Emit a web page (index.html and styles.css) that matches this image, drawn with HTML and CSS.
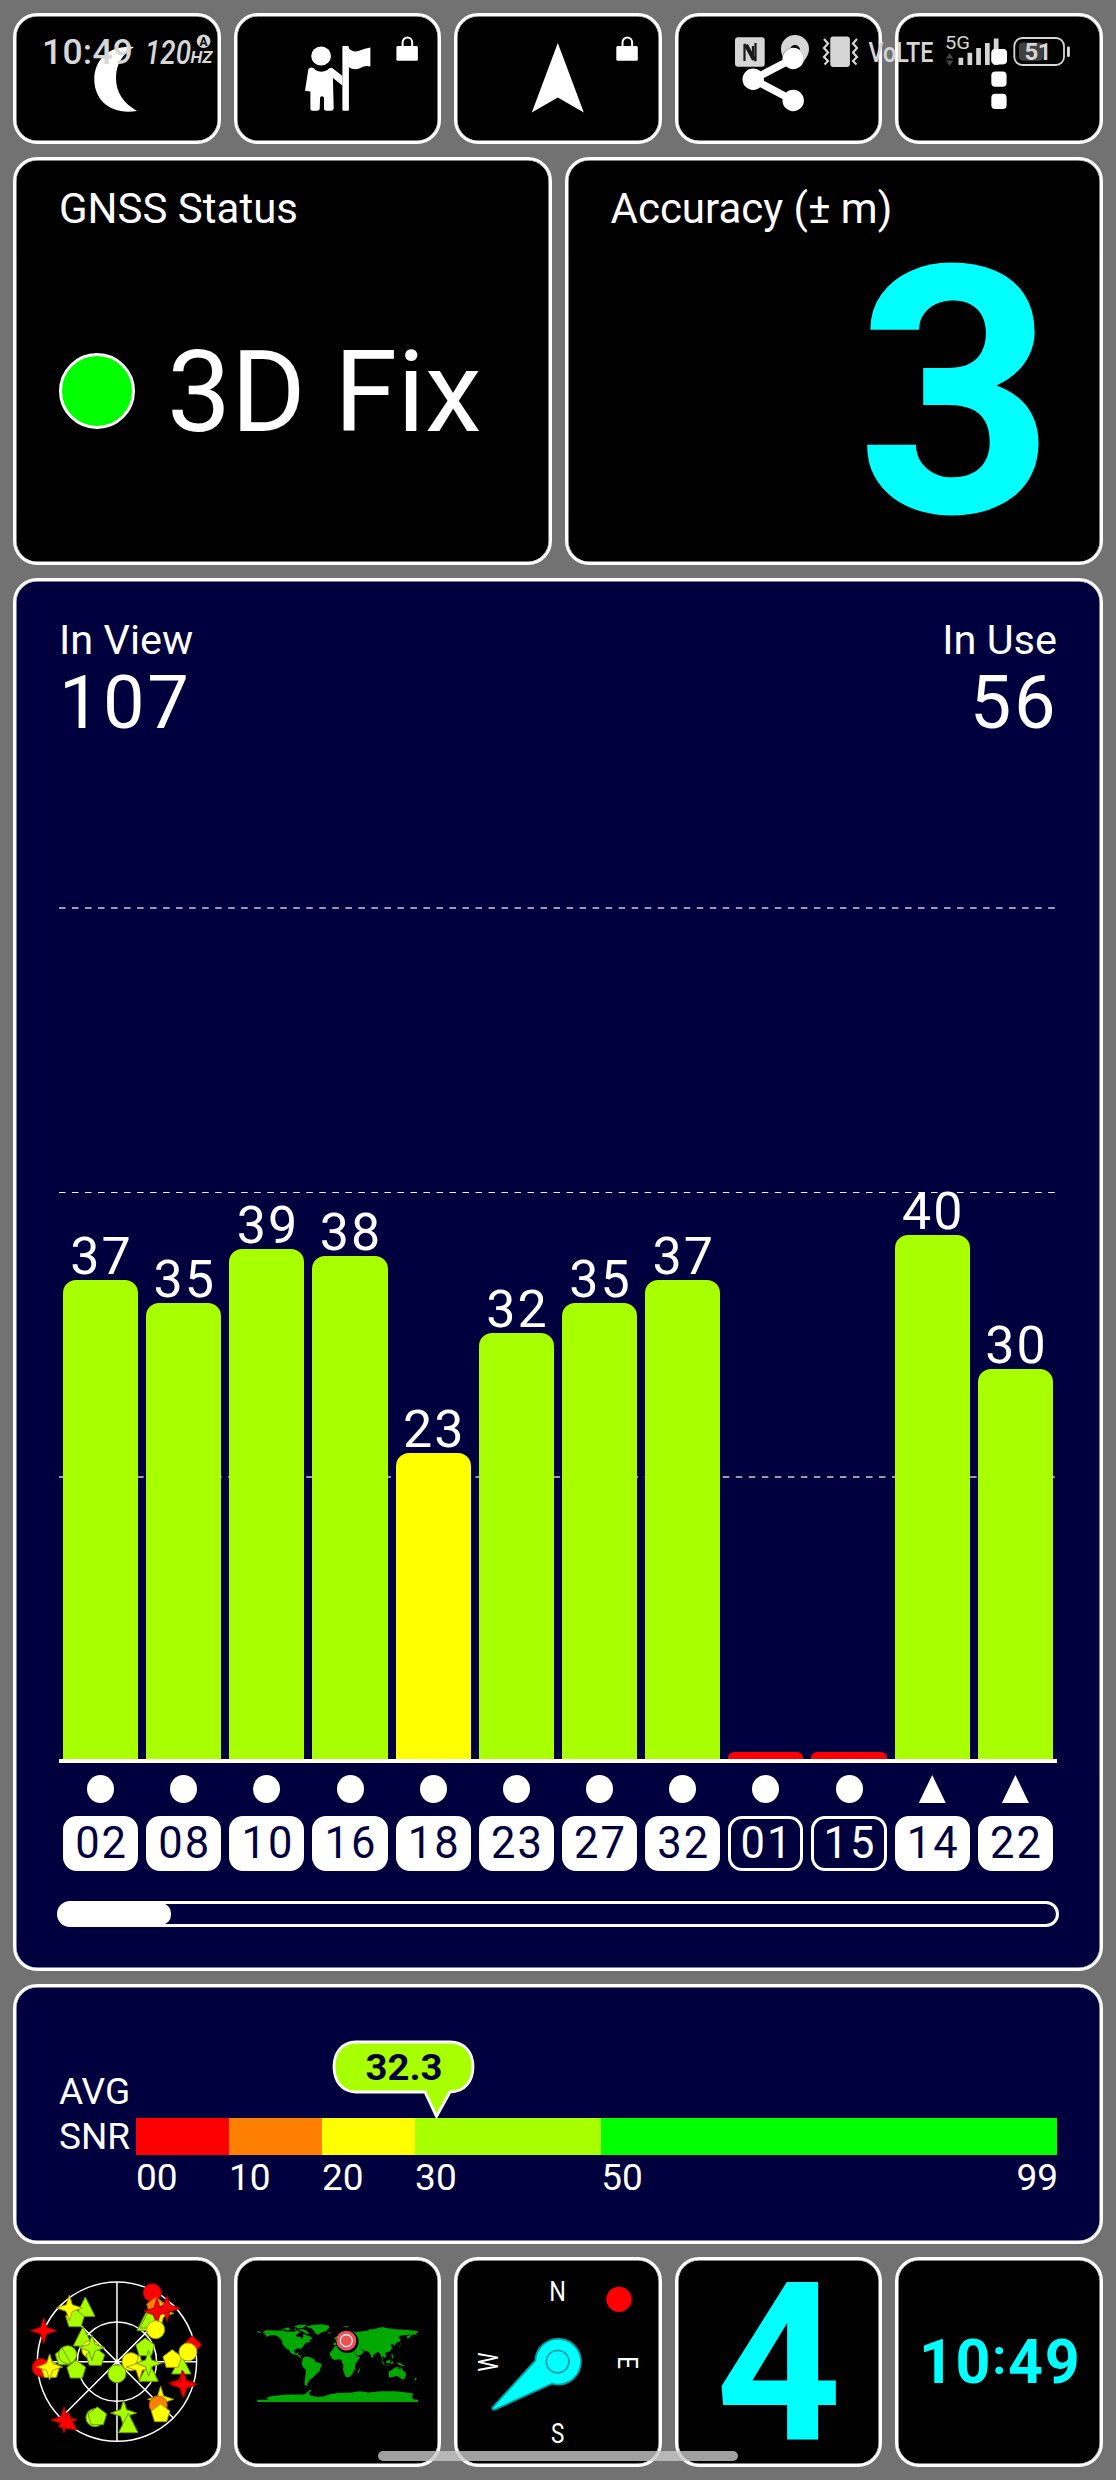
FILE: index.html
```html
<!DOCTYPE html>
<html lang="en">
<head>
<meta charset="utf-8">
<title>GNSS Status</title>
<link rel="stylesheet" href="styles.css">
</head>
<body>
<svg class="defs" width="0" height="0" aria-hidden="true">
  <defs>
    <g id="lock">
      <path d="M402.2 47v-4.5a4.8 5 0 0 1 9.6 0V47" fill="none" stroke="#fff" stroke-width="2"/>
      <rect x="396" y="46" width="21.5" height="14.8" rx="1.5" fill="#fff"/>
    </g>
    <circle id="circ" r="27"/>
    <path id="star" d="M0-39L9-10L39 0L9 10L0 39L-9 10L-39 0L-9-10Z"/>
    <path id="pent" d="M0-29L28-8L18 24H-18L-28-8Z"/>
    <path id="tri" d="M0-32L29 26H-29Z"/>
    <path id="dia" d="M0-28L28 0L0 28L-28 0Z"/>
  </defs>
</svg>

<main class="screen">
  <nav class="row five">
    <button class="card"><svg class="fill" viewBox="16 16 201.6 125"><path fill="#fff" d="M134 47C108 45 94.3 60 94.3 80C94.8 101 111 115 137 111C123 103 116 92 116 78C116 64 122.500 54 134 47Z"/></svg></button>
    <button class="card"><svg class="fill" viewBox="236.600 16 201.600 125" fill="#fff">
      <ellipse cx="320.7" cy="56" rx="9.900" ry="9.400"/>
      <path d="M308 69Q309 67.500 311 67.500Q314 67.800 315 70Q320.700 73.600 327 70Q329 67.500 331.500 67.700L342 76V85.500L332.500 78L333.300 108.500Q333 110.800 330.500 110.800H326Q323.800 110.800 323.600 109V97.500Q321.500 94.800 319.700 97.500L319.300 109Q319 110.800 316.500 110.800H312Q310 110.800 310 109V91.500L304.600 90.700Z"/>
      <rect x="342" y="46" width="6.500" height="64.800" rx="1"/>
      <path d="M348 48Q352 52.500 358 51Q365 48 370 47.500V66.500Q365 65 360 68Q354 71 348 67Z"/>
      <use href="#lock"/></svg></button>
    <button class="card"><svg class="fill" viewBox="457.200 16 201.600 125" fill="#fff"><path d="M558 43L584 112.500L558 97.500L532 112.500Z"/><use href="#lock" x="220.500"/></svg></button>
    <button class="card"><svg class="fill" viewBox="677.800 16 201.600 125" fill="#fff"><path d="M793 58.500L753 79.300L793 100.500" fill="none" stroke="#fff" stroke-width="7.500"/><circle cx="793" cy="58.500" r="10.700"/><circle cx="753" cy="79.300" r="10.700"/><circle cx="793" cy="100.500" r="10.700"/></svg></button>
    <button class="card"><svg class="fill" viewBox="898.400 16 201.600 125" fill="#fff"><rect x="991.700" y="49" width="15.300" height="15.300" rx="4"/><rect x="991.700" y="71.500" width="15.300" height="15.300" rx="4"/><rect x="991.700" y="93.700" width="15.300" height="15.300" rx="4"/></svg></button>
  </nav>

  <section class="row two">
    <div class="card info">
      <div class="label">GNSS Status</div>
      <div class="fix"><span class="led"></span>3D Fix</div>
    </div>
    <div class="card info">
      <div class="label">Accuracy (± m)</div>
      <div class="accuracy">3</div>
    </div>
  </section>

  <section class="card navy sats">
    <header class="counts">
      <div><div class="label">In View</div><div class="count">107</div></div>
      <div class="right"><div class="label">In Use</div><div class="count">56</div></div>
    </header>
    <div class="plot">
      <div class="col">37<i class="bar" style="height:479px"></i></div>
      <div class="col">35<i class="bar" style="height:456px"></i></div>
      <div class="col">39<i class="bar" style="height:510px"></i></div>
      <div class="col">38<i class="bar" style="height:503px"></i></div>
      <div class="col">23<i class="bar mid" style="height:306px"></i></div>
      <div class="col">32<i class="bar" style="height:426px"></i></div>
      <div class="col">35<i class="bar" style="height:456px"></i></div>
      <div class="col">37<i class="bar" style="height:479px"></i></div>
      <div class="col"><i class="bar none" style="height:7px"></i></div>
      <div class="col"><i class="bar none" style="height:7px"></i></div>
      <div class="col">40<i class="bar" style="height:524px"></i></div>
      <div class="col">30<i class="bar" style="height:390px"></i></div>
    </div>
    <div class="ids">
      <div class="id"><i class="gps"></i><b>02</b></div>
      <div class="id"><i class="gps"></i><b>08</b></div>
      <div class="id"><i class="gps"></i><b>10</b></div>
      <div class="id"><i class="gps"></i><b>16</b></div>
      <div class="id"><i class="gps"></i><b>18</b></div>
      <div class="id"><i class="gps"></i><b>23</b></div>
      <div class="id"><i class="gps"></i><b>27</b></div>
      <div class="id"><i class="gps"></i><b>32</b></div>
      <div class="id"><i class="gps"></i><b class="unused">01</b></div>
      <div class="id"><i class="gps"></i><b class="unused">15</b></div>
      <div class="id"><i class="glonass"></i><b>14</b></div>
      <div class="id"><i class="glonass"></i><b>22</b></div>
    </div>
    <div class="scroll"><div class="thumb"></div></div>
  </section>

  <section class="card navy snr">
    <div class="snr-name">AVG<br>SNR</div>
    <div class="gauge">
      <div class="scale">
        <i class="s10 c0"></i><i class="s10 c1"></i><i class="s10 c2"></i><i class="s20 c3"></i><i class="s49 c4"></i>
        <svg class="bubble" width="144" height="80" viewBox="0 0 144 80">
          <path d="M24 2H118C133 2 141 13 141 26.500C141 41 133 52 118 52L104.500 76.500L93 52H24C10 52 2 41 2 26.500C2 13 10 2 24 2Z" fill="#a8ff00" stroke="#fff" stroke-width="2.800"/>
          <text x="72" y="40" text-anchor="middle" fill="#00003e" font-size="37" font-weight="700" textLength="77" lengthAdjust="spacingAndGlyphs">32.3</text>
        </svg>
      </div>
      <div class="ticks"><span class="s10">00</span><span class="s10">10</span><span class="s10">20</span><span class="s20">30</span><span class="s49">50<span class="last">99</span></span></div>
    </div>
  </section>

  <nav class="row five">
    <div class="card"><svg class="fill" viewBox="48 60 605 612">
      <g fill="none" stroke="#fff" stroke-width="4.500"><circle cx="351" cy="365" r="239"/><circle cx="351" cy="365" r="119"/><path d="M351 126V604M112 365H590M182 196L520 534M182 534L520 196"/></g>
      <g stroke-width="3">
        <g class="red"><use href="#circ" x="457" y="158"/></g>
        <g class="orange"><use href="#pent" x="468" y="200"/></g>
        <g class="lime"><use href="#tri" x="440" y="246"/><use href="#tri" x="449" y="238"/></g>
        <g class="yellow"><use href="#star" x="482" y="220"/></g>
        <g class="red"><use href="#star" x="501" y="205"/><use href="#star" x="471" y="214"/></g>
        <g class="yellow"><use href="#circ" x="467" y="269"/></g>
        <g class="lime"><use href="#tri" x="256" y="203"/><use href="#pent" x="225" y="236"/></g>
        <g class="yellow"><use href="#star" x="208" y="204"/></g>
        <g class="red"><use href="#star" x="131" y="272"/><use href="#circ" x="124" y="383"/></g>
        <g class="lime"><use href="#tri" x="249" y="292"/></g>
        <g class="yellow"><use href="#circ" x="272" y="328"/></g>
        <g class="lime"><use href="#pent" x="286" y="352"/><use href="#star" x="276" y="323"/><use href="#pent" x="194" y="350"/><use href="#circ" x="203" y="344"/><path d="M186 323L213 371"/><use href="#pent" x="229" y="390"/></g>
        <g class="yellow"><use href="#pent" x="151" y="388"/><use href="#star" x="149" y="381"/></g>
        <g class="lime"><use href="#circ" x="351" y="401"/><use href="#pent" x="436" y="323"/></g>
        <g class="yellow"><use href="#circ" x="393" y="365"/></g>
        <g class="lime"><use href="#tri" x="446" y="398"/></g>
        <g class="yellow"><use href="#star" x="418" y="381"/></g>
        <g class="lime"><use href="#star" x="446" y="370"/><use href="#tri" x="544" y="376"/></g>
        <g class="yellow"><use href="#pent" x="517" y="358"/></g>
        <g class="red"><use href="#dia" x="577" y="315"/></g>
        <g class="yellow"><use href="#circ" x="564" y="336"/></g>
        <g class="red"><use href="#star" x="547" y="429"/><use href="#star" x="551" y="434"/></g>
        <g class="yellow"><use href="#star" x="482" y="478"/></g>
        <g class="orange"><use href="#circ" x="475" y="495"/></g>
        <g class="yellow"><use href="#pent" x="482" y="521"/></g>
        <g class="lime"><use href="#star" x="371" y="519"/><use href="#tri" x="385" y="552"/><use href="#circ" x="285" y="533"/><use href="#pent" x="292" y="530"/></g>
        <g class="red"><use href="#star" x="192" y="540"/><path d="M205 518L230 570L175 560Z"/></g>
      </g>
    </svg></div>
    <div class="card"><svg class="fill" viewBox="20 60 605 612">
      <g transform="translate(322 365.500) scale(1.339 -1.339)" fill="#00a800">
        <path d="M-168 66L-162 71L-156 71L-140 70L-128 70L-115 68L-108 68L-96 68L-93 71L-87 68L-82 69L-86 65L-94 60L-92 57L-82 55L-80 51L-78 53L-77 58L-78 62L-73 62L-70 59L-65 59L-60 55L-56 52L-65 49L-60 46L-65 44L-70 43L-74 40L-76 36L-81 31L-80 26L-82 28L-84 30L-90 30L-97 27L-97 22L-94 18L-91 19L-88 21L-87 20L-89 16L-84 15L-83 11L-80 8L-78 9L-80 7L-84 9L-87 13L-94 16L-98 16L-105 20L-109 26L-114 31L-110 24L-113 27L-118 34L-124 40L-124 47L-130 54L-138 59L-150 60L-158 56L-164 54L-158 58L-165 61L-161 64ZM-180 69L-170 67L-172 65L-180 66Z"/>
        <path d="M-78 8L-72 12L-62 10L-52 5L-50 0L-38 -4L-35 -7L-39 -15L-41 -22L-48 -27L-54 -34L-58 -38L-62 -39L-65 -45L-68 -49L-68 -54L-74 -52L-74 -44L-72 -30L-71 -18L-76 -14L-81 -5L-79 2Z"/>
        <path d="M-72 78L-60 82L-35 84L-18 81L-20 75L-26 69L-38 65L-44 60L-50 64L-54 70L-60 76Z"/>
        <path d="M-120 76L-110 77L-105 73L-115 70ZM-98 79L-86 83L-68 83L-78 76L-90 76ZM-90 73L-76 73L-66 67L-64 63L-70 63L-78 68L-86 71ZM-100 73L-94 74L-94 71ZM-123 75L-118 73L-124 71Z"/>
        <path d="M-24 66L-14 66L-18 63ZM-9 52L-5 55L-2 58L2 52L-5 50ZM10 80L27 80L20 77ZM-84 22L-75 20L-69 18L-77 20Z"/>
        <path d="M-17 15L-17 21L-10 29L-6 35L10 37L11 33L20 31L31 31L35 27L43 11L51 11L42 -1L39 -7L40 -16L35 -21L33 -27L26 -34L18 -34L12 -18L13 -8L9 1L9 4L3 6L-8 4L-13 8ZM44 -25L49 -14L50 -17L47 -25Z"/>
        <path d="M-9 37L-9 43L-2 44L0 49L8 54L10 58L5 60L14 67L25 71L40 67L34 65L44 67L60 69L68 70L72 73L80 73L100 78L113 75L130 73L150 72L170 70L180 69L180 65L176 65L178 62L164 60L163 56L157 51L155 57L163 62L155 60L142 59L135 54L141 52L140 46L132 43L128 38L127 35L125 39L121 40L119 37L122 31L118 24L110 21L106 19L109 12L105 9L102 13L100 10L103 2L98 9L97 16L91 22L86 20L80 15L79 8L76 11L72 20L67 24L61 25L51 29L59 23L54 17L44 13L39 21L34 28L36 36L27 37L23 36L20 40L14 45L16 39L10 44L3 42L-1 37Z"/>
        <path d="M131 31L136 34L141 37L142 43L145 44L141 42L140 35ZM142 46L144 54L143 49ZM95 5L106 -5L103 -6ZM108 1L118 6L117 -3L110 -3ZM105 -7L116 -8L115 -9L106 -8ZM119 1L125 1L123 -5L120 -5ZM120 18L123 17L126 7L122 9ZM131 -1L141 -3L151 -10L143 -9L138 -7Z"/>
        <path d="M114 -22L122 -18L130 -12L137 -12L136 -15L141 -17L143 -11L146 -19L153 -26L153 -31L150 -38L143 -39L138 -34L131 -32L124 -34L115 -35ZM145 -41L148 -41L147 -43ZM173 -35L178 -38L174 -42L167 -46L173 -41Z"/>
        <path d="M-180 -85L-155 -85L-160 -81L-150 -77L-120 -74L-100 -73L-75 -73L-62 -63L-58 -63L-65 -71L-60 -76L-45 -79L-30 -77L-15 -72L0 -70L30 -69L50 -66L70 -69L95 -66L130 -66L150 -68L170 -71L166 -78L170 -84L180 -85V-90H-180Z"/>
      </g>
      <circle cx="351" cy="305" r="34" fill="#000"/><circle cx="348" cy="302" r="30" fill="#ea5357"/><circle cx="348" cy="302" r="18" fill="none" stroke="#fff" stroke-width="3.500"/>
    </svg></div>
    <div class="card"><svg class="fill" viewBox="52 60 605 612">
      <g fill="#fff" font-size="83" text-anchor="middle">
        <text x="354" y="183" textLength="50" lengthAdjust="spacingAndGlyphs">N</text>
        <text x="354" y="608" textLength="40" lengthAdjust="spacingAndGlyphs">S</text>
        <text transform="translate(535 368) rotate(90)" textLength="38" lengthAdjust="spacingAndGlyphs">E</text>
        <text transform="translate(174 366) rotate(-90)" textLength="58" lengthAdjust="spacingAndGlyphs">W</text>
      </g>
      <circle cx="538" cy="178" r="38" fill="#f00"/>
      <path d="M159 502L287 362A68.500 68.500 0 1 1 337 431L167 508Q156 512 159 502Z" fill="#0ff" stroke="#00a3a3" stroke-width="5.500"/>
      <circle cx="354" cy="365" r="34" fill="none" stroke="#00a3a3" stroke-width="5.500"/>
    </svg></div>
    <div class="card four">4</div>
    <div class="card clock">10<span class="colon">:</span>49</div>
  </nav>
</main>

<svg class="statusbar" width="1116" height="90" viewBox="0 0 1116 90" fill="#d6d6d6">
  <text x="42" y="64" font-size="35.500" font-weight="500" textLength="91">10:49</text>
  <text x="145" y="64" font-size="33" font-style="italic" font-weight="500" textLength="46" lengthAdjust="spacingAndGlyphs">120</text>
  <text x="190.500" y="63.300" font-size="16.500" font-style="italic" font-weight="700" textLength="22" lengthAdjust="spacingAndGlyphs">HZ</text>
  <circle cx="203.600" cy="41.300" r="6.800"/><text x="203.600" y="45.600" font-size="12" font-weight="700" fill="#000" text-anchor="middle">A</text>
  <rect x="735" y="37.300" width="29.700" height="29.500" rx="3"/>
  <path d="M744.500 61V44L753 60V46M755.500 43V61L747 44.500" fill="none" stroke="#1a1a1a" stroke-width="2.200"/>
  <path fill-rule="evenodd" d="M781 49a14 14 0 1 1 28 0c0 6-4 11-9 17h-10c-6-6-9-11-9-17zM790 50a5 5 0 0 0 10 0a5 5 0 0 0-10 0z" mask="url(#shareMask)"/>
  <mask id="shareMask"><rect x="775" y="30" width="40" height="45" fill="#fff"/><path d="M793 58.500L753 79.300" stroke="#000" stroke-width="7.500"/><circle cx="793" cy="58.500" r="10.700" fill="#000"/></mask>
  <rect x="830.300" y="36.500" width="19.600" height="30.500" rx="3"/>
  <path d="M824 39l4 4.500l-4 4.500l4 4.500l-4 4.500l4 4l-3.500 3.500M857 39l-4 4.500l4 4.500l-4 4.500l4 4.500l-4 4l3.500 3.500" fill="none" stroke="#d6d6d6" stroke-width="2.200"/>
  <text x="868.500" y="62" font-size="28" font-weight="500" textLength="65" lengthAdjust="spacingAndGlyphs">VoLTE</text>
  <text x="945" y="49.300" font-size="18.500" textLength="25" lengthAdjust="spacingAndGlyphs">5G</text>
  <path d="M946 58.500l3.700-5.500l3.700 5.500zM946 60.500l3.700 5.500l3.700-5.500z" fill="#474747"/>
  <path d="M958.500 57.700h4.700V65h-4.700zM967.500 52.700h4.700V65h-4.700zM976.200 48h4.700v17h-4.700zM985 43h4.700v22h-4.700zM993.800 38.500h4.700V65h-4.700z"/>
  <path d="M991.700 53q0-4 4-4h7.300q4 0 4 4v7.300q0 4-4 4h-7.300q-4 0-4-4z" fill="#fff"/>
  <rect x="1014.300" y="38" width="49.700" height="27" rx="8" fill="none" stroke="#d6d6d6" stroke-width="1.800"/>
  <rect x="1019" y="42.500" width="24" height="18.200" rx="4" fill="#414141"/>
  <rect x="1067" y="46.500" width="2.900" height="10.500" rx="1.200"/>
  <text x="1024.500" y="59.500" font-size="24" font-weight="700" textLength="27">51</text>
</svg>
<div class="home"></div>
</body>
</html>
```
FILE: styles.css
```css
* { box-sizing: border-box; }
html, body { margin: 0; }
body {
  width: 1116px;
  height: 2480px;
  position: relative;
  overflow: hidden;
  background: #727272;
  color: #fff;
  font-family: Roboto, "Liberation Sans", sans-serif;
}
.defs { display: none; }
.screen {
  height: 2480px;
  padding: 13px;
  display: grid;
  grid-template-rows: 131px 408px 1393px 260px 210px;
  gap: 13px;
}
.row { display: grid; grid-template-rows: minmax(0, 1fr); gap: 13px; }
.five { grid-template-columns: repeat(5, minmax(0, 1fr)); }
.two { grid-template-columns: repeat(2, minmax(0, 1fr)); }
.card {
  background: #000;
  border: 3px solid #fff;
  border-radius: 24px;
  box-shadow: inset 0 0 0 0.5px #fff;
  padding: 0;
  color: inherit;
  font-family: inherit;
  min-width: 0;
  min-height: 0;
}
.navy { background: #00003e; }
.fill { display: block; width: 100%; height: 100%; }

/* fix and accuracy */
.info { padding: 24px 43px 0; }
.label { font-size: 42px; line-height: 50px; white-space: nowrap; }
.fix {
  display: flex;
  align-items: center;
  gap: 32px;
  margin-top: 98px;
  font-size: 114px;
  line-height: 120px;
  white-space: nowrap;
}
.led {
  width: 76px;
  height: 76px;
  margin-bottom: 3px;
  border: 3px solid #fff;
  border-radius: 50%;
  background: #0f0;
}
.accuracy {
  margin: 10px 2px 0 0;
  text-align: right;
  font-size: 346px;
  line-height: 300px;
  font-weight: 700;
  color: #0ff;
}

/* satellites */
.sats { padding: 34px 43px 0; }
.sats .label { font-size: 41.5px; }
.counts { display: flex; justify-content: space-between; height: 124px; }
.count { font-size: 74px; line-height: 74px; margin-top: 1px; letter-spacing: 2.5px; }
.right { text-align: right; }
.right .count { margin-right: -1px; }
.plot {
  height: 1024px;
  border-bottom: 4px solid #fff;
  display: grid;
  grid-template-columns: repeat(12, minmax(0, 1fr));
  background-image:
    linear-gradient(90deg, #9999b2 52%, transparent 52%),
    linear-gradient(90deg, #f0f0f4 52%, transparent 52%),
    linear-gradient(90deg, #9999b2 52%, transparent 52%);
  background-size: 13.03px 2px, 13.03px 1px, 13.03px 2px;
  background-position: 0 168px, 0 453px, 0 737px;
  background-repeat: repeat-x;
}
.col {
  display: flex;
  flex-direction: column;
  align-items: center;
  justify-content: flex-end;
  padding: 0 4px;
  font-size: 52px;
  line-height: 46px;
  letter-spacing: 2px;
  text-indent: 2px;
}
.bar { width: 100%; flex: none; background: #a8ff00; border-radius: 13px 13px 0 0; }
.mid { background: #ff0; }
.none { background: #f00; border-radius: 6px 6px 0 0; }
.ids { display: grid; grid-template-columns: repeat(12, minmax(0, 1fr)); padding-top: 12px; }
.id { display: flex; flex-direction: column; align-items: center; padding: 0 4px; gap: 13px; }
.gps { width: 27px; height: 28px; border-radius: 50%; background: #fff; }
.glonass { width: 27px; height: 28px; background: #fff; clip-path: polygon(50% 0, 100% 100%, 0 100%); }
.id b {
  width: 100%;
  height: 55px;
  border: 3px solid #fff;
  border-radius: 14px;
  background: #fff;
  color: #00003e;
  font-size: 43.5px;
  font-weight: 400;
  line-height: 50px;
  letter-spacing: 2px;
  text-indent: 2px;
  text-align: center;
}
.id .unused { background: none; color: #fff; }
.scroll { height: 26px; margin: 30px -2px 0; border: 3px solid #fff; border-radius: 13px; }
.thumb { width: 112px; height: 22px; margin: -1px; border-radius: 10px; background: #fff; }

/* average SNR */
.snr { display: flex; padding: 82px 43px 0; }
.snr-name { width: 77px; font-size: 37px; line-height: 45px; }
.gauge { flex: 1; padding-top: 49px; }
.scale { display: flex; height: 37px; position: relative; }
.bubble { position: absolute; left: 195.500px; top: -78px; }
.s10 { flex: 10 0 0; }
.s20 { flex: 20 0 0; }
.s49 { flex: 49 0 0; display: flex; justify-content: space-between; }
.c0 { background: #f00; }
.c1 { background: #ff8000; }
.c2 { background: #ff0; }
.c3 { background: #a8ff00; }
.c4 { background: #0f0; }
.ticks { display: flex; font-size: 37px; line-height: 45px; }
.last { margin-right: -1px; }

/* bottom tiles */
.red { fill: #f00; stroke: #b40000; }
.orange { fill: #ff8000; stroke: #b45a00; }
.yellow { fill: #ff0; stroke: #a0a000; }
.lime { fill: #a8ff00; stroke: #6a9f00; }
.four {
  padding-top: 4px;
  text-align: center;
  font-size: 220px;
  line-height: 200px;
  font-weight: 700;
  color: #0ff;
}
.clock {
  text-align: center;
  font-size: 61px;
  line-height: 204px;
  font-weight: 700;
  letter-spacing: 1.7px;
  text-indent: 2px;
  color: #0ff;
}
.colon { font-size: 50px; line-height: 0; vertical-align: 9px; }

/* system overlays */
.statusbar { position: absolute; left: 0; top: 0; }
.home {
  position: absolute;
  left: 378px;
  top: 2451px;
  width: 360px;
  height: 10px;
  border-radius: 5px;
  background: rgba(200, 200, 200, 0.8);
}
```
